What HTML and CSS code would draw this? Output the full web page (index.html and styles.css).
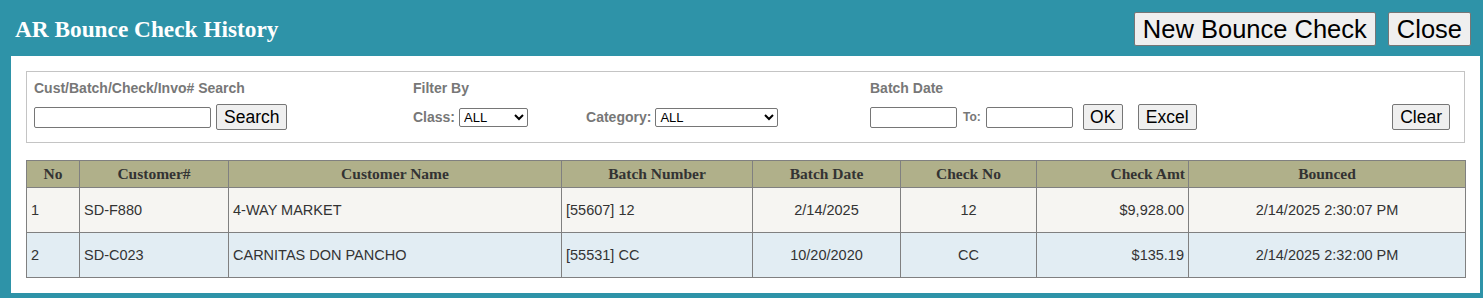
FILE: index.html
```html
<!DOCTYPE html>
<html lang="en">
<head>
    <meta charset="UTF-8">
    <title>AR Bounce Check History</title>
    <link rel="stylesheet" href="styles.css">
</head>
<body>
    <div class="frame">
        <div class="topbar">
            <h1>AR Bounce Check History</h1>
            <div class="top-buttons">
                <button class="big-btn">New Bounce Check</button>
                <button class="big-btn">Close</button>
            </div>
        </div>

        <div class="panel">
            <div class="filters">
                <div class="group group-search">
                    <div class="label">Cust/Batch/Check/Invo# Search</div>
                    <div class="controls">
                        <input type="text" class="txt-search">
                        <button class="btn">Search</button>
                    </div>
                </div>
                <div class="group group-filter">
                    <div class="label">Filter By</div>
                    <div class="controls">
                        <span class="lbl">Class:</span>
                        <select class="sel-class"><option>ALL</option></select>
                        <span class="lbl lbl-cat">Category:</span>
                        <select class="sel-cat"><option>ALL</option></select>
                    </div>
                </div>
                <div class="group group-date">
                    <div class="label">Batch Date</div>
                    <div class="controls">
                        <input type="text" class="txt-date">
                        <span class="lbl lbl-to">To:</span>
                        <input type="text" class="txt-date">
                        <button class="btn btn-ok">OK</button>
                        <button class="btn btn-excel">Excel</button>
                        <button class="btn btn-clear">Clear</button>
                    </div>
                </div>
            </div>

            <table class="grid">
                <colgroup>
                    <col style="width:53px">
                    <col style="width:149px">
                    <col style="width:333px">
                    <col style="width:191px">
                    <col style="width:148px">
                    <col style="width:136px">
                    <col style="width:152px">
                    <col style="width:277px">
                </colgroup>
                <thead>
                    <tr>
                        <th>No</th>
                        <th>Customer#</th>
                        <th>Customer Name</th>
                        <th>Batch Number</th>
                        <th>Batch Date</th>
                        <th>Check No</th>
                        <th class="right">Check Amt</th>
                        <th>Bounced</th>
                    </tr>
                </thead>
                <tbody>
                    <tr class="row-odd">
                        <td>1</td>
                        <td>SD-F880</td>
                        <td>4-WAY MARKET</td>
                        <td>[55607] 12</td>
                        <td class="center">2/14/2025</td>
                        <td class="center">12</td>
                        <td class="right">$9,928.00</td>
                        <td class="center">2/14/2025 2:30:07 PM</td>
                    </tr>
                    <tr class="row-even">
                        <td>2</td>
                        <td>SD-C023</td>
                        <td>CARNITAS DON PANCHO</td>
                        <td>[55531] CC</td>
                        <td class="center">10/20/2020</td>
                        <td class="center">CC</td>
                        <td class="right">$135.19</td>
                        <td class="center">2/14/2025 2:32:00 PM</td>
                    </tr>
                </tbody>
            </table>
        </div>
    </div>
</body>
</html>
```

FILE: styles.css
```css
* {
    box-sizing: border-box;
    margin: 0;
    padding: 0;
}

body {
    font-family: "Liberation Sans", Arial, sans-serif;
    background-color: #2e93a8;
    width: 1483px;
    height: 298px;
    overflow: hidden;
}

.frame {
    background-color: #2e93a8;
    padding: 0 3px 5px 11px;
}

.topbar {
    height: 56px;
    display: flex;
    align-items: center;
    justify-content: space-between;
    margin-left: -11px;
    margin-right: -3px;
    padding: 0 12px 0 15px;
}

h1 {
    font-family: "Liberation Serif", "Times New Roman", serif;
    font-size: 23.3px;
    font-weight: bold;
    color: white;
    margin-top: 2px;
}

.top-buttons {
    display: flex;
    gap: 12px;
    margin-top: 2px;
}

button {
    font-family: "Liberation Sans", Arial, sans-serif;
    background-color: #efefef;
    color: black;
    border: 1px solid #767676;
    border-radius: 2px;
}

.big-btn {
    font-size: 25.5px;
    height: 34px;
    padding: 0 8px;
}

.panel {
    background-color: white;
    padding: 15px 15px 16px 15px;
    height: 237px;
}

.filters {
    border: 1px solid #c4c4c4;
    padding: 9px 14px 12px 7px;
    height: 72px;
    display: flex;
}

.group-search {
    width: 379px;
}

.group-filter {
    width: 457px;
}

.group-date {
    flex: 1;
}

.label {
    font-size: 14px;
    font-weight: bold;
    color: #777;
    line-height: 15px;
    height: 15px;
    margin-bottom: 8px;
}

.controls {
    display: flex;
    align-items: center;
    height: 26px;
}

.lbl {
    font-size: 14px;
    font-weight: bold;
    color: #777;
    margin-right: 4px;
}

.lbl-cat {
    margin-left: 58px;
}

.lbl-to {
    font-size: 12px;
    margin-left: 6px;
    margin-right: 5px;
}

input[type="text"] {
    height: 21px;
    border: 1px solid #767676;
    border-radius: 2px;
    background: white;
}

.txt-search {
    width: 177px;
    margin-right: 5px;
}

.txt-date {
    width: 87px;
}

select {
    font-family: "Liberation Sans", Arial, sans-serif;
    font-size: 13px;
    height: 19px;
    border: 1px solid #767676;
    border-radius: 2px;
    background: white;
    color: black;
}

.sel-class {
    width: 69px;
}

.sel-cat {
    width: 123px;
}

.btn {
    font-size: 17.5px;
    height: 26px;
    padding: 0 7px;
}

.btn-ok {
    margin-left: 10px;
    width: 40px;
    padding: 0;
}

.btn-excel {
    margin-left: 15px;
}

.btn-clear {
    margin-left: auto;
}

.grid {
    margin-top: 17px;
    border-collapse: collapse;
    table-layout: fixed;
    width: 1439px;
    border: 1px solid #808080;
}

.grid th {
    font-family: "Liberation Serif", "Times New Roman", serif;
    font-size: 15.5px;
    font-weight: bold;
    color: #333;
    background-color: #b0b08a;
    height: 27px;
    border: 1px solid #808080;
    text-align: center;
    padding: 0 3px;
}

.grid td {
    font-size: 14.5px;
    color: #333;
    height: 45px;
    border: 1px solid #808080;
    padding: 0 4px;
}

.grid .center {
    text-align: center;
}

.grid .right {
    text-align: right;
}

.row-odd {
    background-color: #f6f5f2;
}

.row-even {
    background-color: #e2edf3;
}
```
